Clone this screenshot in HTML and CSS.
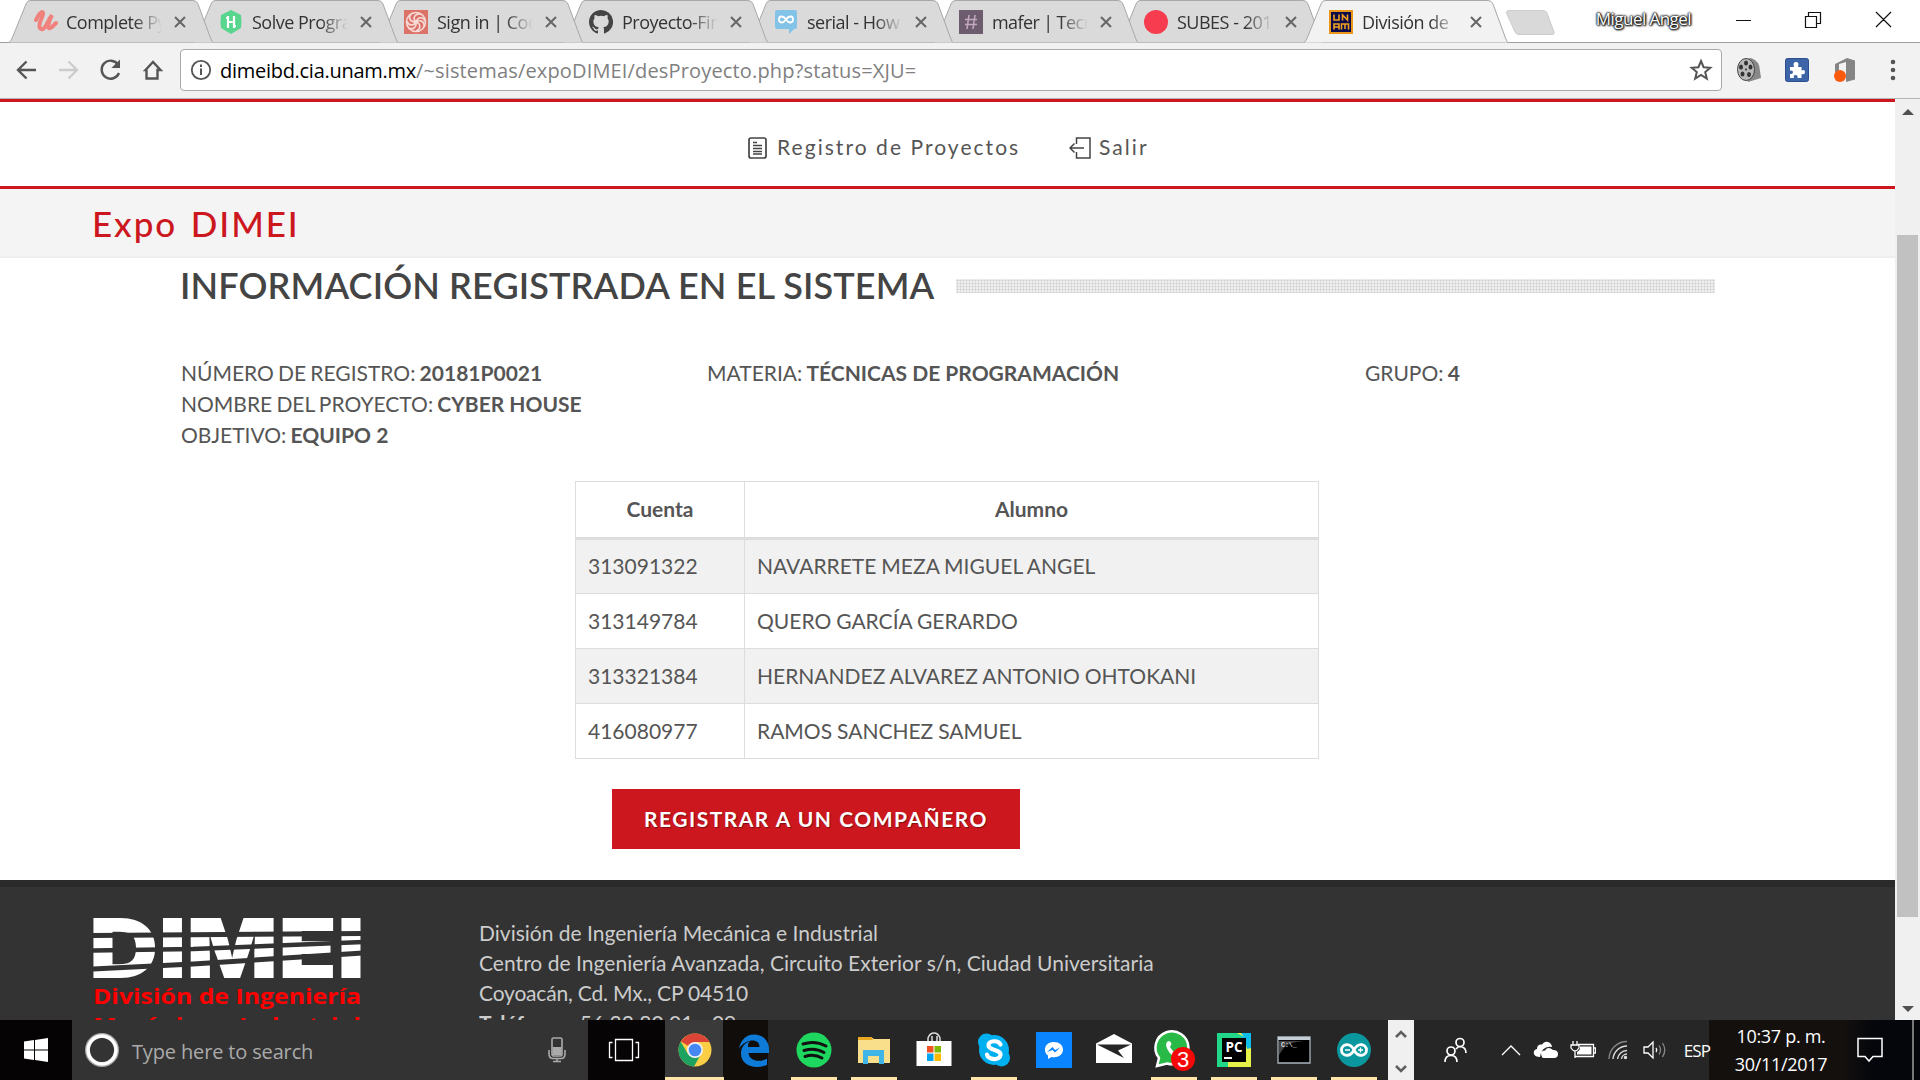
FILE: index.html
```html
<!DOCTYPE html>
<html lang="es">
<head>
<meta charset="utf-8">
<title>División de Ingeniería Mecánica e Industrial</title>
<link rel="stylesheet" href="styles.css">
</head>
<body>
<svg class="defs" width="0" height="0">
  <symbol id="tab" viewBox="0 0 204 43"><path d="M0 42.5Q2 42 4 36L17 4Q18.500 .5 21 .5H184Q187.500 .5 189 4L201.500 38Q203 42 204 42.500" stroke="#a8a8a8"/></symbol>
  <symbol id="x" viewBox="0 0 12 12"><path d="M1 1 11 11M11 1 1 11" stroke="#666" stroke-width="2"/></symbol>
</svg>

<div class="tabstrip">
  <div class="tab t1"><svg class="shape"><use href="#tab"/></svg>
    <svg class="fav" viewBox="0 0 24 24"><path d="M2 10C4 5 8 0 9 3S3 14 6 18 12 16 16 8L18 5C13 15 13 21 18 17L22 13" fill="none" stroke="#f0817c" stroke-width="4" stroke-linecap="round"/></svg>
    <span class="title">Complete Py</span><svg class="close"><use href="#x"/></svg></div>
  <div class="tab t2"><svg class="shape"><use href="#tab"/></svg>
    <svg class="fav" viewBox="0 0 24 24"><path d="M12 0 22 5Q23 12 22 18L12 24 2 18Q1 12 2 5Z" fill="#58d68d"/><path d="M9 6V18M15 6V18M9 12H15M7 8H9M15 16H17" stroke="#fff" stroke-width="2.200"/></svg>
    <span class="title">Solve Progra</span><svg class="close"><use href="#x"/></svg></div>
  <div class="tab t3"><svg class="shape"><use href="#tab"/></svg>
    <svg class="fav" viewBox="0 0 24 24"><path d="M0 0H24V24H0Z" fill="#dc7368"/><g fill="none" stroke="#f8dcd8" stroke-width="1.600"><circle cx="12" cy="12" r="9.500"/><path d="M12 12C8 8 11 3 17 4M12 12C6 12 4 8 7 4M12 12C9 17 4 15 3 11M12 12C13 18 8 20 5 18M12 12C18 14 16 20 12 21M12 12C17 9 21 12 20 17M12 12C14 6 20 7 21 11"/></g></svg>
    <span class="title">Sign in | Cod</span><svg class="close"><use href="#x"/></svg></div>
  <div class="tab t4"><svg class="shape"><use href="#tab"/></svg>
    <svg class="fav" viewBox="0 0 16 16"><path fill="#444" d="M8 0C3.580 0 0 3.580 0 8c0 3.540 2.290 6.530 5.470 7.590.4.070.55-.17.55-.38 0-.19-.01-.82-.01-1.490-2.010.37-2.530-.49-2.690-.94-.09-.23-.48-.94-.82-1.130-.28-.15-.68-.52-.01-.53.63-.01 1.080.58 1.230.82.72 1.210 1.870.87 2.330.66.070-.52.28-.87.51-1.070-1.780-.2-3.640-.89-3.640-3.950 0-.87.31-1.590.82-2.150-.08-.2-.36-1.020.08-2.120 0 0 .67-.21 2.200.82a7.600 7.600 0 0 1 4 0c1.530-1.040 2.200-.82 2.200-.82.44 1.100.16 1.920.08 2.120.51.56.82 1.270.82 2.150 0 3.070-1.870 3.750-3.650 3.950.29.25.54.73.54 1.480 0 1.070-.01 1.930-.01 2.200 0 .21.15.46.55.38A8 8 0 0 0 8 0"/></svg>
    <span class="title">Proyecto-Fin</span><svg class="close"><use href="#x"/></svg></div>
  <div class="tab t5"><svg class="shape"><use href="#tab"/></svg>
    <svg class="fav" viewBox="0 0 24 24"><path d="M3 0H21Q23 0 23 2V17Q23 19 21 19H20L15 24V19H3Q1 19 1 17V2Q1 0 3 0" fill="#84c3e8"/><path d="M12 9.500C9 5 5 6 5 9.500S9 14 12 9.500 19 6 19 9.500 15 14 12 9.500" fill="none" stroke="#fff" stroke-width="1.800"/></svg>
    <span class="title">serial - How</span><svg class="close"><use href="#x"/></svg></div>
  <div class="tab t6"><svg class="shape"><use href="#tab"/></svg>
    <svg class="fav" viewBox="0 0 24 24"><path d="M0 0H24V24H0Z" fill="#6c5c6e"/><path d="M10 5 8 19M16 5 14 19M6 9.500H18M6 14.500H18" stroke="#c5a9c3" stroke-width="1.500"/></svg>
    <span class="title narrow">mafer | Tecn</span><svg class="close"><use href="#x"/></svg></div>
  <div class="tab t7"><svg class="shape"><use href="#tab"/></svg>
    <svg class="fav" viewBox="0 0 24 24"><circle cx="12" cy="12" r="12" fill="#f73c50"/></svg>
    <span class="title">SUBES - 201</span><svg class="close"><use href="#x"/></svg></div>
  <div class="tab active"><svg class="shape"><use href="#tab"/></svg>
    <svg class="fav" viewBox="0 0 24 24"><path d="M1 1H23V23H1Z" fill="#0b0b4c" stroke="#ea9619" stroke-width="2"/><path d="M5 4.500V10H10V4.500M13.500 10.500V5L18.500 10V4.500M5 19.500V14H10V19.500M5 17H10M12.500 19.500V14H19.500V19.500M16 14V19" fill="none" stroke="#f0a020" stroke-width="1.600"/></svg>
    <span class="title">División de</span><svg class="close"><use href="#x"/></svg></div>
  <svg class="newtab" viewBox="0 0 52 26"><path d="M4 .5H38Q41 .5 42 3L49 22Q50 24.500 47 24.500H14Q11 24.500 10 22L1.500 3Q1 .5 4 .5" fill="#d9d9d9" stroke="#ccc"/></svg>
  <span class="user">Miguel Angel</span>
  <svg class="winctl" viewBox="0 0 160 24"><path d="M1 12.500H16M70.500 8.500H81.500V19.500H70.500ZM73.500 8V4.500H85.500V15.500H82M141 4 156 19M156 4 141 19" fill="none" stroke="#111" stroke-width="1.200"/></svg>
</div>

<div class="toolbar">
  <svg class="navicons" viewBox="0 0 160 30" fill="none" stroke="#555" stroke-width="2.400">
    <path d="M29 15H11M19.500 6.500 11 15 19.500 23.500"/>
    <path d="M52 15H70M61.500 6.500 70 15 61.500 23.500" stroke="#ccc"/>
    <path d="M111 9.500A9 9 0 1 0 112 18"/><path d="M113 4.500V13H104.500Z" fill="#555" stroke="none"/>
    <path d="M137.500 15 145 7 152.500 15 149.500 15V23.500H138.500V15Z" transform="translate(1)"/>
  </svg>
  <div class="address">
    <svg class="info" viewBox="0 0 22 22"><circle cx="11" cy="11" r="9.200" fill="none" stroke="#555" stroke-width="1.800"/><path d="M11 9.500V16M11 5.500V8" stroke="#555" stroke-width="2"/></svg>
    <span class="url"><b>dimeibd.cia.unam.mx</b><span class="path">/~sistemas/expoDIMEI/desProyecto.php?status=XJU=</span></span>
    <svg class="star" viewBox="0 0 24 24"><path d="M12 3 14.600 9.200 21.300 9.700 16.200 14 17.800 20.600 12 17 6.200 20.600 7.800 14 2.700 9.700 9.400 9.200Z" fill="none" stroke="#555" stroke-width="2"/></svg>
  </div>
  <div class="extensions">
    <svg viewBox="0 0 26 26"><path d="M6 3 15 1Q24 4 24 14L25 21 12 25Z" fill="#888"/><ellipse cx="10" cy="12.500" rx="8.500" ry="11" fill="#b9b9b9" stroke="#444"/><g fill="#333"><ellipse cx="10" cy="6" rx="2" ry="2.500"/><ellipse cx="5" cy="10" rx="2" ry="2.500"/><ellipse cx="14.500" cy="10" rx="2" ry="2.500"/><ellipse cx="6.500" cy="17" rx="2" ry="2.500"/><ellipse cx="13" cy="17.500" rx="2" ry="2.500"/><circle cx="10" cy="12.500" r="1"/></g></svg>
    <svg viewBox="0 0 26 26"><rect x="1.500" y="1.500" width="23" height="23" rx="2" fill="#3d64a6" stroke="#2c4f90"/><path d="M6 10H10Q8.500 5 12 5T14 10H17.500V13.500Q21 12 21 15T17.500 17V21H13.500Q14 18 11.500 18T10 21H6V17Q9 17 9 15T6 13.500Z" fill="#fff"/></svg>
    <svg viewBox="0 0 26 26"><path d="M3 7 15 1 23 3.500V22.500L14 25V5L7 7V14L3 16Z" fill="#858585"/><circle cx="8" cy="19" r="6" fill="#fb5a0b"/></svg>
    <svg viewBox="0 0 26 26" fill="#555"><circle cx="13" cy="5" r="2.300"/><circle cx="13" cy="13" r="2.300"/><circle cx="13" cy="21" r="2.300"/></svg>
  </div>
</div>

<div class="viewport">
  <main class="page">
    <nav class="mainnav">
      <a><svg class="doc" viewBox="0 0 19 22"><rect x="1" y="1" width="17" height="20" rx="2" fill="none" stroke="#444" stroke-width="1.700"/><path d="M5 5.500H9M5 8.500H14M5 11.500H14M5 14.500H14M5 17H14" stroke="#444" stroke-width="1.400"/></svg><span class="n1">Registro de Proyectos</span></a>
      <a><svg class="exit" viewBox="0 0 22 22"><path d="M7.500 7V1H21V21H7.500V15M15 11H1M5.500 6.500 1 11 5.500 15.500" fill="none" stroke="#444" stroke-width="1.500"/></svg><span class="n2">Salir</span></a>
    </nav>
    <div class="titlebar"><h1>Expo DIMEI</h1></div>
    <section class="content">
      <div class="heading"><h2>INFORMACIÓN REGISTRADA EN EL SISTEMA</h2><div class="dots"></div></div>
      <div class="meta">
        <div>NÚMERO DE REGISTRO: <b>20181P0021</b></div>
        <div>MATERIA: <b>TÉCNICAS DE PROGRAMACIÓN</b></div>
        <div>GRUPO: <b>4</b></div>
        <div class="full">NOMBRE DEL PROYECTO: <b>CYBER HOUSE</b></div>
        <div class="full">OBJETIVO: <b>EQUIPO 2</b></div>
      </div>
      <table class="students">
        <thead><tr><th>Cuenta</th><th>Alumno</th></tr></thead>
        <tbody>
          <tr><td>313091322</td><td>NAVARRETE MEZA MIGUEL ANGEL</td></tr>
          <tr><td>313149784</td><td>QUERO GARCÍA GERARDO</td></tr>
          <tr><td>313321384</td><td>HERNANDEZ ALVAREZ ANTONIO OHTOKANI</td></tr>
          <tr><td>416080977</td><td>RAMOS SANCHEZ SAMUEL</td></tr>
        </tbody>
      </table>
      <button class="register">REGISTRAR A UN COMPAÑERO</button>
    </section>
    <footer class="footer">
      <svg class="logo" viewBox="0 0 270 110">
        <text class="logo-big" x="-4" y="60" textLength="276" lengthAdjust="spacingAndGlyphs">DIMEI</text>
        <g stroke="#333" fill="none"><path d="M0 17.500 270 15.500" stroke-width="5"/><path d="M0 32.500 100 31 270 24" stroke-width="4.500"/><path d="M0 51 100 46 270 35" stroke-width="5"/></g>
        <text class="logo-sub" x="0" y="86" textLength="268" lengthAdjust="spacingAndGlyphs">División de Ingeniería</text>
        <text class="logo-sub" x="0" y="115" textLength="268" lengthAdjust="spacingAndGlyphs">Mecánica e Industrial</text>
      </svg>
      <address>División de Ingeniería Mecánica e Industrial<br><span class="wide">Centro de Ingeniería Avanzada, Circuito Exterior s/n, Ciudad Universitaria</span><br><span class="tight">Coyoacán, Cd. Mx., CP 04510</span><br><b>Teléfonos:</b> 56 22 80 01 - 09</address>
    </footer>
  </main>
  <div class="scrollbar">
    <svg viewBox="0 0 12 6"><path d="M0 6 6 0 12 6Z" fill="#505050"/></svg>
    <div class="thumb"></div>
    <svg viewBox="0 0 12 6"><path d="M0 0 6 6 12 0Z" fill="#505050"/></svg>
  </div>
</div>

<div class="taskbar">
  <div class="start"><svg width="24" height="24" viewBox="0 0 24 24" fill="#fff"><path d="M0 3.500 10 2V11.400H0ZM11 1.900 24 0V11.400H11ZM0 12.600H10V22L0 20.500ZM11 12.600H24V24L11 22.100Z"/></svg></div>
  <div class="search">
    <svg width="34" height="34" viewBox="0 0 34 34"><circle cx="17" cy="17" r="14.500" fill="none" stroke="#aaa" stroke-width="5"/><circle cx="17" cy="17" r="14" fill="none" stroke="#fff" stroke-width="3.400"/></svg>
    <span>Type here to search</span>
    <svg width="18" height="26" viewBox="0 0 18 26"><rect x="4" y="1" width="10" height="18" rx="1.500" fill="none" stroke="#aaa" stroke-width="1.600"/><path d="M4.500 10H13.500V18H4.500Z" fill="#aaa"/><path d="M1 13V17Q1 21.500 5 21.500H13Q17 21.500 17 17V13M9 21V24M5 24.500H13" fill="none" stroke="#aaa" stroke-width="1.600"/></svg>
  </div>
  <div class="taskview"><svg width="32" height="24" viewBox="0 0 32 24"><path d="M7.500 1.500H24.500V22.500H7.500ZM4.500 4.500H1.500V19.500H4.500M27.500 4.500H30.500V19.500H27.500" fill="none" stroke="#fff" stroke-width="1.300"/></svg></div>
  <div class="apps">
    <div class="app run chrome"><svg viewBox="0 0 36 36"><circle cx="18" cy="18" r="16.500" fill="#fbce45"/><path d="M18 18 4 9.500A16.500 16.500 0 0 1 32.500 10H18Z" fill="#db4437"/><path d="M18 26 11 22 3.700 9.700A16.500 16.500 0 0 0 17 34.500L24 22Z" fill="#1da261"/><path d="M18 10H32.500Q20 4 14 13Z" fill="#db4437"/><circle cx="18" cy="18" r="8" fill="#f2f2f2"/><circle cx="18" cy="18" r="6.300" fill="#4587f3"/></svg></div>
    <div class="app"><svg viewBox="0 0 36 36"><path d="M3 16.500C5 7 11 2.500 18 2.500 28 2.500 33 10 33 17V21H12.500C13 29 24 31 31 26.500V33C18 38 5 33 5 21.500 5 15 9 11 14 9 12 11 12 13 12 15H23.500C23.500 6 10 6.500 3 16.500Z" fill="#0f7bd8"/></svg></div>
    <div class="app run"><svg viewBox="0 0 36 36"><circle cx="18" cy="18" r="17.500" fill="#1ed75f"/><path d="M7 12Q19 8 30 14M8 18.500Q19 15 28 20.500M9 24.500Q18 21.500 26 26" fill="none" stroke="#111" stroke-width="3" stroke-linecap="round"/></svg></div>
    <div class="app run"><svg viewBox="0 0 36 36"><path d="M2 5H15L18 7H34V31H2Z" fill="#f9df8b"/><path d="M2 5H15L17 8H2Z" fill="#e9a820"/><path d="M7 32V18H28V32H23V24H12V32Z" fill="#3fb4e6"/></svg></div>
    <div class="app"><svg viewBox="0 0 36 36"><path d="M12 10V6Q14 1 18 1T24 6V10M16 10V4M21 10V4" fill="none" stroke="#ddd" stroke-width="1.500"/><path d="M.5 9H35.500V34H.5Z" fill="#fff"/><path d="M11 14H17.500V20.500H11Z" fill="#f25022"/><path d="M18.500 14H25V20.500H18.500Z" fill="#7fba00"/><path d="M11 21.500H17.500V29H11Z" fill="#00a4ef"/><path d="M18.500 21.500H25V29H18.500Z" fill="#ffb900"/></svg></div>
    <div class="app run"><svg viewBox="0 0 36 36"><circle cx="18" cy="18" r="15" fill="#00aff0"/><circle cx="10.500" cy="10" r="8.500" fill="#00aff0"/><circle cx="25.500" cy="26" r="8.500" fill="#00aff0"/><path d="M24.500 12.500C23 8 12 8 12.500 13.500S25 17 24.500 23 12 28 11 22.500" fill="none" stroke="#fff" stroke-width="4.200" stroke-linecap="round"/></svg></div>
    <div class="app"><svg viewBox="0 0 36 36"><path d="M0 0H36V36H0Z" fill="#0a84ff"/><path d="M18 10C8 10 7 20 12 23.500V27L15.500 25C23 26.500 27 22 27 17.500 27 13 23 10 18 10Z" fill="#fff"/><path d="M11 20 16.500 15 19 18 24 15.500 19 20.500 16.500 18Z" fill="#0a84ff"/></svg></div>
    <div class="app"><svg viewBox="0 0 36 36"><path d="M0 11.500 18 2 36 11.500V31H0Z" fill="#fff"/><path d="M1 12.500H35L22 18.500 28 26 12 18Z" fill="#262626"/></svg></div>
    <div class="app run"><svg viewBox="0 0 36 36"><path d="M1 34 3 26A16.500 16.500 0 1 1 11 31.500Z" fill="#29b947" stroke="#fff" stroke-width="2.500"/><path d="M11 10Q14 7 15.500 12L14 15Q16 19 20 21L25 21 23 25Q16 26 11.500 17.500 9 13 11 10" fill="#fff"/><circle cx="27" cy="27" r="12" fill="#f50808"/><text x="27" y="35" class="badge">3</text></svg></div>
    <div class="app run"><svg viewBox="0 0 36 36"><path d="M1 1H35V35H1Z" fill="#21d789"/><path d="M24 1H35V14L30 20Z" fill="#07c3f2"/><path d="M21 1H25L35 14V35H12V28H30V6Z" fill="#e6f24a"/><path d="M27 1H35V16L31 17Z" fill="#10bde8"/><path d="M6 6H30V30H6Z" fill="#000"/><path d="M8 26H16" stroke="#fff" stroke-width="2"/><text x="18" y="20" class="pc">PC</text></svg></div>
    <div class="app run"><svg viewBox="0 0 36 36"><path d="M2 5H34V31H2Z" fill="#000" stroke="#a9b4be" stroke-width="1.300"/><path d="M2 5H34V8H2Z" fill="#c5cdd5"/><path d="M3 9H28Q10 10 5 20L3 23Z" fill="#444"/><text x="5" y="15" class="cmd">C:\_</text></svg></div>
    <div class="app run"><svg viewBox="0 0 36 36"><circle cx="18" cy="18" r="17" fill="#0a979d"/><path d="M18 18C14 10 5.500 12 5.500 18S14 26 18 18 30.500 12 30.500 18 22 26 18 18Z" fill="none" stroke="#fff" stroke-width="2.800"/><path d="M9 18H14M22 18H27M24.500 15.500V20.500" stroke="#fff" stroke-width="1.300"/></svg></div>
  </div>
  <div class="overflow"><svg width="12" height="8" viewBox="0 0 12 8"><path d="M1 7 6 2 11 7" fill="none" stroke="#606060" stroke-width="2.600"/></svg><svg width="12" height="8" viewBox="0 0 12 8"><path d="M1 1 6 6 11 1" fill="none" stroke="#606060" stroke-width="2.600"/></svg></div>
  <div class="tray">
    <div class="people"><svg width="24" height="26" viewBox="0 0 24 26" fill="none" stroke="#fff" stroke-width="1.700"><circle cx="16" cy="5.500" r="4"/><circle cx="7" cy="14" r="4"/><path d="M1 25Q1 18.500 7 18.500T13 25M12 12Q14 9.500 16 9.500 22 10 22 16"/></svg></div>
    <div class="up"><svg width="20" height="12" viewBox="0 0 20 12"><path d="M1 11 10 2 19 11" fill="none" stroke="#fff" stroke-width="1.400"/></svg></div>
    <div class="cloud"><svg width="26" height="18" viewBox="0 0 26 18"><path d="M1 13Q0 9 4 8 4 3 9 3.500 12-1 17 2 19 4 19 6 9 4 7 16 2 16 1 13M9 16Q6 10 12 9.500 15 5 20 9 25 9 25 13 25 17 21 17H11Q9 17 9 16" fill="#fff"/></svg></div>
    <div class="batt"><svg width="26" height="18" viewBox="0 0 26 18"><path d="M8 3.500H23.500V15.500H5M23.500 7H25.500V12H23.500M3 0V4M7 0V4M1 4H9V7Q7 10 5 10T1 7ZM5 10V17" fill="none" stroke="#fff" stroke-width="1.300"/><path d="M10 5.500H21.500V13.500H7V11Q9 10 10 8Z" fill="#fff"/></svg></div>
    <div class="wifi"><svg width="20" height="20" viewBox="0 0 20 20" fill="none" stroke="#ddd" stroke-width="1.400"><path d="M1 19A18 18 0 0 1 19 1.500" stroke="#888"/><path d="M5 19A14 14 0 0 1 19 6M9.500 19A9.500 9.500 0 0 1 19 10.500M13.500 19A5.500 5.500 0 0 1 19 14"/><circle cx="17.500" cy="17.500" r="1" fill="#fff"/></svg></div>
    <div class="vol"><svg width="24" height="20" viewBox="0 0 24 20" fill="none" stroke="#fff" stroke-width="1.300"><path d="M1 7H5L10 2V18L5 13H1ZM13 8Q14.500 10 13 12"/><path d="M16 5.500Q19 10 16 14.500M19.500 3Q24 10 19.500 17" stroke="#888"/></svg></div>
    <div class="lang">ESP</div>
    <div class="clock"><span>10:37 p. m.</span><span>30/11/2017</span></div>
    <div class="notif"><svg width="26" height="26" viewBox="0 0 26 26"><path d="M1 1.500H25V19.500H16L12 24 8 19.500H1Z" fill="none" stroke="#fff" stroke-width="1.500"/></svg></div>
    <div class="peek"></div>
  </div>
</div>
</body>
</html>
```
FILE: styles.css
```css
* { box-sizing: border-box; }
body { margin: 0; width: 1920px; height: 1080px; overflow: hidden; display: flex; flex-direction: column; font-family: "Open Sans", "Noto Sans", sans-serif; background: #fff; }
svg { display: block; flex: none; }
.defs { position: absolute; }

.tabstrip { height: 43px; flex: none; display: flex; padding-left: 9px; background: linear-gradient(#a0a0a0, #a0a0a0) 0 42px / 100% 1px no-repeat #fff; }
.tab { position: relative; width: 204px; height: 43px; margin-right: -19px; flex: none; display: flex; align-items: center; padding-left: 25px; }
.shape { position: absolute; inset: 0; width: 204px; height: 43px; fill: #dadada; }
.fav { position: relative; width: 24px; height: 24px; }
.title { position: relative; width: 96px; margin-left: 9px; font-size: 18px; line-height: 24px; letter-spacing: -0.5px; white-space: nowrap; overflow: hidden; color: #333; mask-image: linear-gradient(90deg, #000 68px, transparent 96px); }
.narrow { letter-spacing: -0.6px; }
.close { position: relative; width: 12px; height: 12px; margin-left: 12px; }
.t1 { z-index: 7; } .t2 { z-index: 6; } .t3 { z-index: 5; } .t4 { z-index: 4; } .t5 { z-index: 3; } .t6 { z-index: 2; } .t7 { z-index: 1; }
.t1 .title { margin-left: 8px; }
.active { z-index: 8; }
.active .shape { fill: #f2f2f2; }
.newtab { width: 52px; height: 26px; margin: 10px 0 0 16px; }
.user { margin: 8px 0 0 36px; width: 98px; font-size: 17px; line-height: 22px; letter-spacing: -0.55px; white-space: nowrap; text-align: right; color: #fff; text-shadow: 0 0 2px #000, 0 0 2px #000, 1px 1px 2px #000, 0 0 3px #333; }
.winctl { width: 160px; height: 24px; margin: 8px 0 0 44px; }

.toolbar { height: 56px; flex: none; display: flex; align-items: center; padding-bottom: 1px; background: #f2f2f2; border-bottom: 1px solid #b4b4b4; }
.navicons { width: 160px; height: 30px; margin-left: 7px; }
.address { width: 1542px; height: 42px; margin-left: 13px; flex: none; display: flex; align-items: center; padding: 0 8px 0 9px; background: #fff; border: 1px solid #a9a9a9; border-radius: 4px; }
.info { width: 22px; height: 22px; }
.url { margin-left: 8px; padding-top: 1px; flex: 1; font-size: 20px; line-height: 28px; letter-spacing: 0.16px; color: #808080; white-space: nowrap; }
.url b { font-weight: 400; color: #000; letter-spacing: -0.28px; }
.star { width: 24px; height: 24px; }
.extensions { display: flex; gap: 22px; margin-left: 14px; }
.extensions svg { width: 26px; height: 26px; }

.viewport { height: 921px; flex: none; display: flex; }
.page { width: 1895px; height: 921px; overflow: hidden; font-family: Lato, sans-serif; font-size: 21px; color: #555; }
.mainnav { height: 90px; border-top: 3px solid #cd171e; border-bottom: 3px solid #cd171e; display: flex; gap: 49px; padding: 7px 0 0 748px; color: #555; }
.mainnav a { display: flex; align-items: center; height: 77px; font-size: 21px; font-weight: 400; letter-spacing: 2.050px; white-space: nowrap; }
.doc { width: 19px; height: 22px; margin-right: 10px; }
.exit { width: 22px; height: 22px; margin-right: 8px; }
.mainnav span { padding-bottom: 2px; }
.n1 { width: 243px; }
.titlebar { height: 69px; padding-left: 92px; background: #f4f4f4; border-bottom: 2px solid #eee; }
h1 { margin: 0; font-size: 35px; line-height: 69px; font-weight: 500; letter-spacing: 1.9px; word-spacing: 3px; color: #cd171e; }
.content { height: 622px; padding: 0 180px; display: flex; flex-direction: column; }
.heading { display: flex; align-items: center; height: 56px; gap: 22px; }
h2 { margin: -2px 0 0; width: 754px; font-size: 36px; line-height: 56px; font-weight: 600; letter-spacing: 0.13px; color: #444; white-space: nowrap; }
.dots { width: 759px; height: 14px; background: radial-gradient(circle at 1.500px 1.500px, #cfcfcf 0.600px, #fafafa 1.700px) 0 0 / 3px 3px; }
.meta { margin-top: 43px; padding-left: 1px; display: grid; grid-template-columns: 526px 658px 1fr; line-height: 31px; white-space: nowrap; word-spacing: -1.2px; }
.meta b { word-spacing: 0; }
.full { grid-column: 1 / -1; }
.students { width: 744px; margin: 31px 0 0 395px; border-collapse: collapse; table-layout: fixed; word-spacing: -0.4px; }
.students th, .students td { height: 55px; padding: 0 12px 2px; border: 1px solid #ddd; text-align: left; white-space: nowrap; }
.students th:first-child { width: 169px; }
.students th { height: 57px; text-align: center; border-bottom: 3px solid #ddd; }
.students tbody tr:nth-child(odd) { background: #f1f1f1; }
.register { width: 408px; height: 60px; margin: 30px 0 0 432px; padding: 0 0 2px; border: 0; background: #cd171e; color: #fff; font: 700 21px Lato, sans-serif; letter-spacing: 1.5px; text-shadow: 1px 1px 1px rgba(0,0,0,.4); white-space: nowrap; }
.footer { height: 140px; display: flex; padding: 31px 0 0 93px; background: #333; border-top: 7px solid #2a2a2a; color: #ccc; }
.logo { width: 270px; height: 110px; }
.logo-big { font: 900 82px Inter, sans-serif; fill: #fff; }
.logo-sub { font: 700 22px "Open Sans", sans-serif; fill: #f00; }
address { margin-left: 116px; font-style: normal; line-height: 30px; white-space: nowrap; }
.wide { letter-spacing: 0.03px; }
.tight { letter-spacing: -0.18px; }
.scrollbar { width: 25px; padding: 10px 2px 8px; background: #f0f0f0; display: flex; flex-direction: column; align-items: center; }
.scrollbar svg { width: 12px; height: 6px; }
.thumb { width: 21px; height: 682px; margin-top: 120px; background: #c1c1c1; }
.scrollbar svg:last-child { margin-top: auto; }

.taskbar { height: 60px; flex: none; display: flex; background: #262626; color: #fff; }
.taskbar > div { flex: none; }
.start { width: 72px; display: flex; align-items: center; justify-content: center; background: #050303; }
.search { width: 516px; display: flex; align-items: center; padding-left: 13px; background: #333; color: #aaa; font-size: 20px; }
.search span { margin: 2px 0 0 13px; flex: 1; letter-spacing: -0.15px; }
.search svg:last-child { margin-right: 22px; }
.taskview { width: 77px; display: flex; align-items: center; padding-left: 20px; background: #060404; }
.apps { width: 723px; display: flex; background: linear-gradient(90deg, #3b3a3a 58px, #100d0b 58px 103px, #262626 103px); }
.app { width: 60px; display: flex; flex-direction: column; align-items: center; padding-top: 12px; }
.app:first-child { width: 59px; }
.app svg { width: 36px; height: 36px; overflow: visible; }
.run::after { content: ""; width: 46px; height: 3px; margin-top: 9px; background: #ffe5a9; }
.chrome::after { width: 59px; }
.badge { font: 22px "Liberation Sans", sans-serif; fill: #fff; text-anchor: middle; }
.pc { font: 700 13.500px "Open Sans", sans-serif; fill: #fff; text-anchor: middle; }
.cmd { font: 700 6.500px "Liberation Mono", monospace; fill: #ddd; }
.overflow { width: 26px; display: flex; flex-direction: column; align-items: center; justify-content: space-between; padding: 10px 0 7px; background: #f0f0f0; }
.tray { width: 506px; display: flex; background: linear-gradient(90deg, #262626 295px, #14100e 295px 430px, #04060c 460px); }
.tray > div { flex: none; display: flex; align-items: center; justify-content: center; }
.tray .people { width: 84px; } .tray .up { width: 26px; } .cloud { width: 44px; } .batt { width: 29px; } .wifi { width: 41px; } .tray .vol { width: 34px; }
.lang { width: 50px; font-size: 17px; letter-spacing: -0.8px; }
.tray .clock { width: 118px; flex-direction: column; font-size: 18px; line-height: 28px; letter-spacing: -0.3px; }
.notif { width: 60px; }
.tray .peek { width: 2px; margin-left: 12px; background: #777; }
```
